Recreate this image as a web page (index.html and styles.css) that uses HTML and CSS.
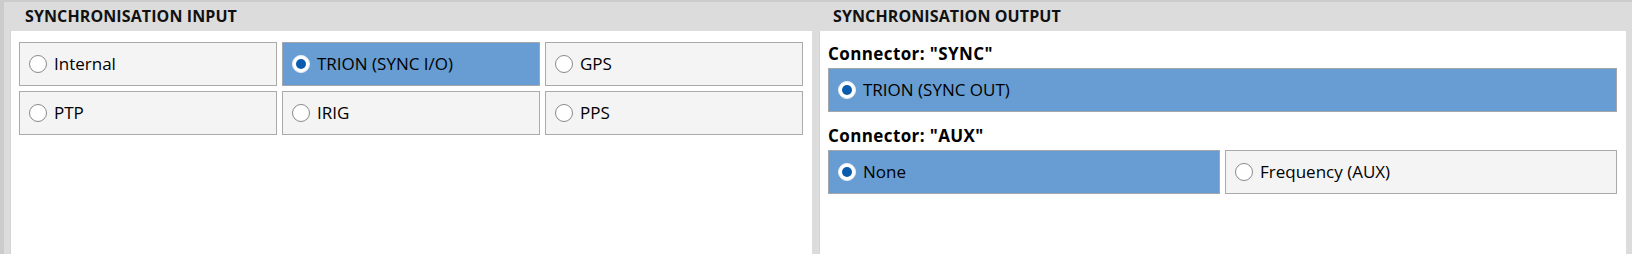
FILE: index.html
```html
<!DOCTYPE html>
<html>
<head>
    <title>Synchronisation</title>
    <link rel="stylesheet" href="styles.css">
</head>
<body>
    <div class="frame">
        <section class="panel panel-input">
            <h2 class="panel-title">SYNCHRONISATION INPUT</h2>
            <div class="panel-body">
                <div class="option-grid">
                    <label class="option"><span class="radio"></span>Internal</label>
                    <label class="option selected"><span class="radio"></span>TRION (SYNC I/O)</label>
                    <label class="option"><span class="radio"></span>GPS</label>
                    <label class="option"><span class="radio"></span>PTP</label>
                    <label class="option"><span class="radio"></span>IRIG</label>
                    <label class="option"><span class="radio"></span>PPS</label>
                </div>
            </div>
        </section>
        <section class="panel panel-output">
            <h2 class="panel-title">SYNCHRONISATION OUTPUT</h2>
            <div class="panel-body">
                <div class="connector">
                    <div class="connector-label">Connector: "SYNC"</div>
                    <div class="option-row">
                        <label class="option selected"><span class="radio"></span>TRION (SYNC OUT)</label>
                    </div>
                </div>
                <div class="connector">
                    <div class="connector-label">Connector: "AUX"</div>
                    <div class="option-row">
                        <label class="option selected"><span class="radio"></span>None</label>
                        <label class="option"><span class="radio"></span>Frequency (AUX)</label>
                    </div>
                </div>
            </div>
        </section>
    </div>
</body>
</html>
```

FILE: styles.css
```css
html, body {
    margin: 0;
    padding: 0;
    height: 100%;
}
body {
    font-family: "Open Sans", "Noto Sans", sans-serif;
    font-size: 17px;
    color: #000;
    background: #dcdcdc;
    border-top: 2px solid #cccccc;
    border-left: 4px solid #cccccc;
    box-sizing: border-box;
    overflow: hidden;
}
.frame {
    display: flex;
    gap: 7px;
    padding: 0 6px;
    height: 100%;
}
.panel {
    display: flex;
    flex-direction: column;
}
.panel-input {
    width: 802px;
}
.panel-output {
    flex: 1;
}
.panel-title {
    margin: 0;
    height: 29px;
    line-height: 29px;
    font-size: 16px;
    font-weight: 700;
    color: #111;
    padding-left: 15px;
    letter-spacing: 0.1px;
}
.panel-output .panel-title {
    padding-left: 14px;
}
.panel-body {
    flex: 1;
    background: #fff;
    border-left: 1px solid #d4d4d4;
    padding: 11px 9px 0 8px;
}
.panel-output .panel-body {
    padding-top: 12px;
}
.option-grid {
    display: grid;
    grid-template-columns: repeat(3, 1fr);
    grid-auto-rows: 44px;
    gap: 5px;
}
.option {
    display: flex;
    align-items: center;
    gap: 7px;
    padding-left: 9px;
    background: #f4f4f4;
    border: 1px solid #aaaaaa;
    box-sizing: border-box;
    line-height: 22px;
    white-space: nowrap;
}
.option.selected {
    background: #679dd2;
    border-color: #a3a7ab;
}
.radio {
    width: 18px;
    height: 18px;
    box-sizing: border-box;
    border-radius: 50%;
    border: 1px solid #8a8a8a;
    background: #fff;
    flex-shrink: 0;
    position: relative;
}
.option.selected .radio {
    border-color: #e8eef5;
}
.option.selected .radio::after {
    content: "";
    position: absolute;
    left: 3px;
    top: 3px;
    width: 10px;
    height: 10px;
    border-radius: 50%;
    background: #0b5cae;
}
.connector + .connector {
    margin-top: 13px;
}
.connector-label {
    font-weight: 700;
    line-height: 22px;
    letter-spacing: 0.4px;
    margin-bottom: 3px;
}
.option-row {
    display: flex;
    gap: 5px;
}
.option-row .option {
    flex: 1;
    height: 44px;
}
```
